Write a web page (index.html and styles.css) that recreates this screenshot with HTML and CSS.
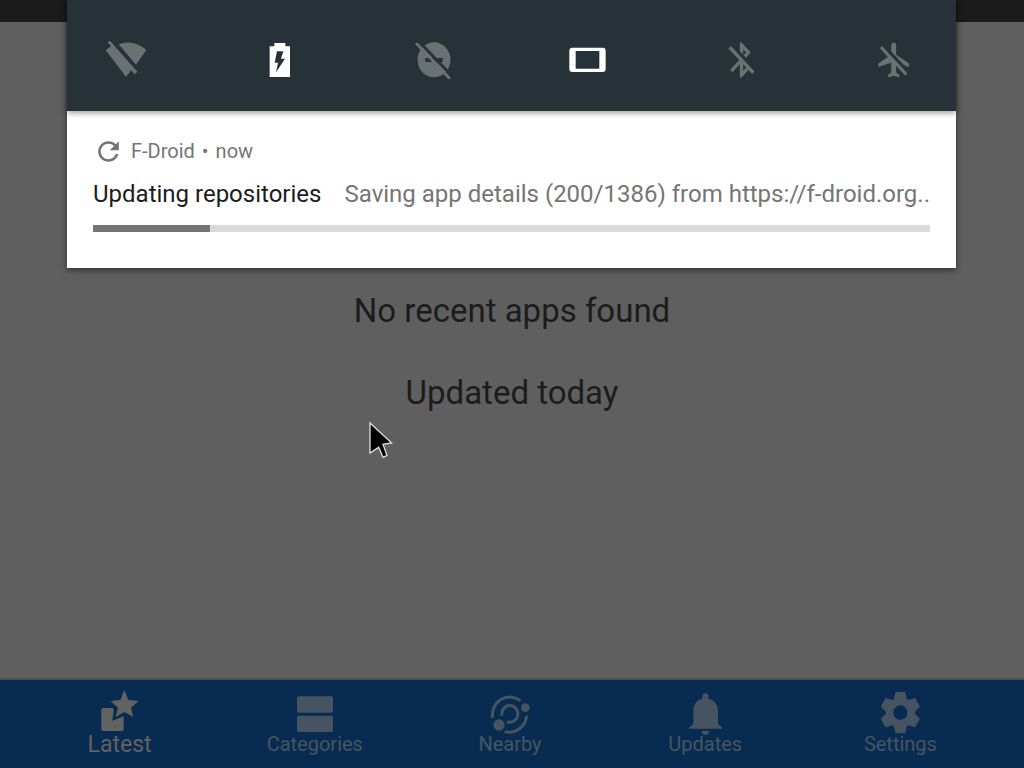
FILE: index.html
```html
<!DOCTYPE html>
<html lang="en">
<head>
    <meta charset="UTF-8">
    <meta name="viewport" content="width=device-width, initial-scale=1.0">
    <title>F-Droid</title>

    <link rel="stylesheet" href="styles.css">
</head>
<body>

    <div class="status-bar"></div>

    <main class="content">
        <p>No recent apps found</p>
        <p>Updated today</p>
    </main>

    <!-- bottom navigation -->
    <nav class="bottom-nav">
        <a href="#latest" class="nav-item active">
            <svg class="icon" viewBox="0 0 132 132">
                <path d="M79 0L91 30L122 33L99 53L106 81L79 66L53 81L60 53L38 33L67 30Z"/>
                <path d="M15 54H44Q48 58 47 63L43 92L77 79V118Q77 123 72 123H15Q10 123 10 118V59Q10 54 15 54Z"/>
            </svg>
            <span>Latest</span>
        </a>
        <a href="#categories" class="nav-item">
            <svg class="icon" viewBox="0 0 132 132">
                <rect x="12" y="19" width="108" height="49" rx="5"/>
                <rect x="12" y="77" width="108" height="49" rx="5"/>
            </svg>
            <span>Categories</span>
        </a>
        <a href="#nearby" class="nav-item">
            <svg class="icon" viewBox="0 0 132 132">
                <g class="line">
                    <path d="M14 84A52 54 0 0 1 97 32"/>
                    <path d="M116 77A53 54 0 0 1 50 125"/>
                    <path d="M42 77A24 25 0 1 1 57 95"/>
                </g>
                <circle cx="33" cy="105" r="17"/>
                <circle cx="112" cy="53" r="13"/>
            </svg>
            <span>Nearby</span>
        </a>
        <a href="#updates" class="nav-item">
            <svg class="icon" viewBox="0 0 132 132">
                <path d="M18 116V113L31 101V62C31 42 43 29 58 26V19A9 9 0 0 1 76 19V26C92 29 105 42 105 62V101L117 113V116Z"/>
                <path d="M56 123H78A11 11 0 0 1 56 123Z"/>
            </svg>
            <span>Updates</span>
        </a>
        <a href="#settings" class="nav-item">
            <svg class="icon" viewBox="0 0 132 132">
                <g transform="translate(67 68) scale(.96 1)">
                    <circle r="45"/>
                    <path id="teeth" d="M-21 -38L-15 -62H15L21 -38V38L15 62H-15L-21 38Z"/>
                    <use href="#teeth" transform="rotate(60)"/>
                    <use href="#teeth" transform="rotate(120)"/>
                    <circle class="hole" r="22"/>
                </g>
            </svg>
            <span>Settings</span>
        </a>
    </nav>

    <!-- notification shade -->
    <section class="shade">
        <header class="quick-settings">
            <button aria-label="Wi-Fi">
                <svg class="icon" viewBox="0 0 132 132">
                    <path d="M44 19Q87 3 127 36L96 80Z"/>
                    <path d="M18 8L100 101L92 109L82 97L66 116L5 37L21 25L11 13Z"/>
                </svg>
            </button>
            <button aria-label="Battery" class="on">
                <svg class="icon" viewBox="0 0 132 132">
                    <path fill-rule="evenodd" d="M49 15H82V25H96V117H35V25H49ZM57 40L50 74H60L54 103L81 62H69L76 40Z"/>
                </svg>
            </button>
            <button aria-label="Do not disturb">
                <svg class="icon" viewBox="0 0 132 132">
                    <path fill-rule="evenodd" d="M66 13A49 52 0 1 1 66 118A49 52 0 1 1 66 13ZM40 60V72H92V60Z"/>
                    <path class="gap" d="M20 10L120 114"/>
                    <path class="strike" d="M15 18L111 119"/>
                </svg>
            </button>
            <button aria-label="Auto-rotate" class="on">
                <svg class="icon" viewBox="0 0 132 132">
                    <path fill-rule="evenodd" d="M22 29H113Q122 29 122 38V93Q122 102 113 102H22Q13 102 13 93V38Q13 29 22 29ZM32 39V92H103V39Z"/>
                </svg>
            </button>
            <button aria-label="Bluetooth">
                <svg class="icon narrow" viewBox="0 0 24 24" preserveAspectRatio="none">
                    <path d="M13 5.83l1.88 1.88-1.6 1.6 1.41 1.41 3.02-3.02L12 2h-1v5.03l2 2v-3.2zM5.41 4L4 5.41 10.59 12 5 17.59 6.41 19 11 14.41V22h1l4.29-4.29 2.3 2.29L20 18.59 5.41 4zM13 18.17v-3.76l1.88 1.88L13 18.17z"/>
                </svg>
            </button>
            <button aria-label="Airplane mode">
                <svg class="icon narrow" viewBox="0 0 24 24" preserveAspectRatio="none">
                    <path d="M13 9V3.5c0-.83-.67-1.5-1.5-1.5S10 2.67 10 3.5v3.68l7.83 7.83L21 16v-2l-8-5zM3 5.27l4.99 4.99L2 14v2l8-2.5V19l-2 1.5V22l3.5-1 3.5 1v-1.5L13 19v-3.73L18.73 21 20 19.73 4.27 4 3 5.27z"/>
                </svg>
            </button>
        </header>

        <article class="notification">
            <div class="app-row">
                <svg class="refresh" viewBox="0 0 24 24">
                    <path d="M17.65 6.35C16.2 4.9 14.21 4 12 4c-4.42 0-7.99 3.58-7.99 8s3.57 8 7.99 8c3.73 0 6.84-2.55 7.73-6h-2.08c-.82 2.33-3.04 4-5.65 4-3.31 0-6-2.69-6-6s2.69-6 6-6c1.66 0 3.14.69 4.22 1.78L13 11h7V4l-2.35 2.35z"/>
                </svg>
                <span>F-Droid</span>
                <span>•</span>
                <span>now</span>
            </div>
            <div class="message">
                <label for="progress">Updating repositories</label>
                <span class="details">Saving app details (200/1386) from https://f-droid.org..</span>
            </div>
            <progress id="progress" value="14" max="100"></progress>
        </article>
    </section>

    <svg class="cursor" viewBox="0 0 78 117">
        <path d="M6 6L71 66L45 70L57 103L45 109L32 79L6 96Z"/>
    </svg>

</body>
</html>
```
FILE: styles.css
```css
* {
    box-sizing: border-box;
}

body {
    margin: 0;
    min-height: 100vh;
    display: flex;
    flex-direction: column;
    background-color: #5f5f5f;
    font-family: Roboto, "Liberation Sans", sans-serif;
    color: #1c1c1c;
}

.status-bar {
    height: 22px;
    background-color: #1b1b1b;
}

.content {
    flex: 1;
    display: flex;
    flex-direction: column;
    align-items: center;
    gap: 42px;
    padding-top: 269px;
}

.content p {
    margin: 0;
    font-size: 33px;
    line-height: 40px;
}

.icon {
    display: block;
    width: 44px;
    height: 44px;
    fill: currentColor;
    overflow: visible;
}

/* bottom navigation */
.bottom-nav {
    height: 88px;
    display: flex;
    padding: 10px 26px 0 22px;
    background-color: #082c51;
    box-shadow: 0 -1px 2px rgba(0, 0, 0, 0.3);
}

.nav-item {
    flex: 1;
    display: flex;
    flex-direction: column;
    align-items: center;
    color: #465461;
    font-size: 20px;
    line-height: 20px;
    text-decoration: none;
}

.nav-item.active {
    color: #626262;
    font-size: 23px;
    line-height: 22px;
}

.line {
    fill: none;
    stroke: currentColor;
    stroke-width: 9;
}

.hole {
    fill: #082c51;
}

/* notification shade */
.shade {
    position: absolute;
    top: 0;
    left: 67px;
    right: 68px;
    background-color: white;
    box-shadow: 0 2px 6px rgba(0, 0, 0, 0.5);
}

.quick-settings {
    height: 111px;
    display: flex;
    justify-content: space-between;
    padding: 38px 39px 0 37px;
    background-color: #273238;
    box-shadow: 0 2px 6px rgba(0, 0, 0, 0.4);
}

.quick-settings button {
    width: 44px;
    height: 44px;
    display: flex;
    justify-content: center;
    align-items: center;
    padding: 0;
    border: none;
    background: none;
    color: #697174;
}

.quick-settings .on {
    color: white;
}

.icon.narrow {
    width: 39px;
    height: 42px;
}

.gap {
    stroke: #273238;
    stroke-width: 9;
}

.strike {
    stroke: currentColor;
    stroke-width: 9;
    stroke-linecap: round;
}

.notification {
    padding: 24px 26px 36px;
}

.app-row {
    display: flex;
    align-items: center;
    gap: 7px;
    color: #757575;
    font-size: 20px;
    line-height: 32px;
}

.refresh {
    width: 31px;
    height: 31px;
    fill: currentColor;
}

.message {
    display: flex;
    justify-content: space-between;
    padding: 10px 0 14px;
    font-size: 24px;
    line-height: 34px;
    white-space: nowrap;
}

.details {
    color: #757575;
}

progress {
    display: block;
    width: 100%;
    height: 7px;
    border: none;
    appearance: none;
    background-color: #dadada;
}

progress::-webkit-progress-bar {
    background-color: #dadada;
}

progress::-webkit-progress-value {
    background-color: #757575;
}

/* mouse pointer */
.cursor {
    position: absolute;
    top: 421px;
    left: 368px;
    width: 26px;
    height: 39px;
    fill: black;
    stroke: #dddddd;
    stroke-width: 4;
}
```
